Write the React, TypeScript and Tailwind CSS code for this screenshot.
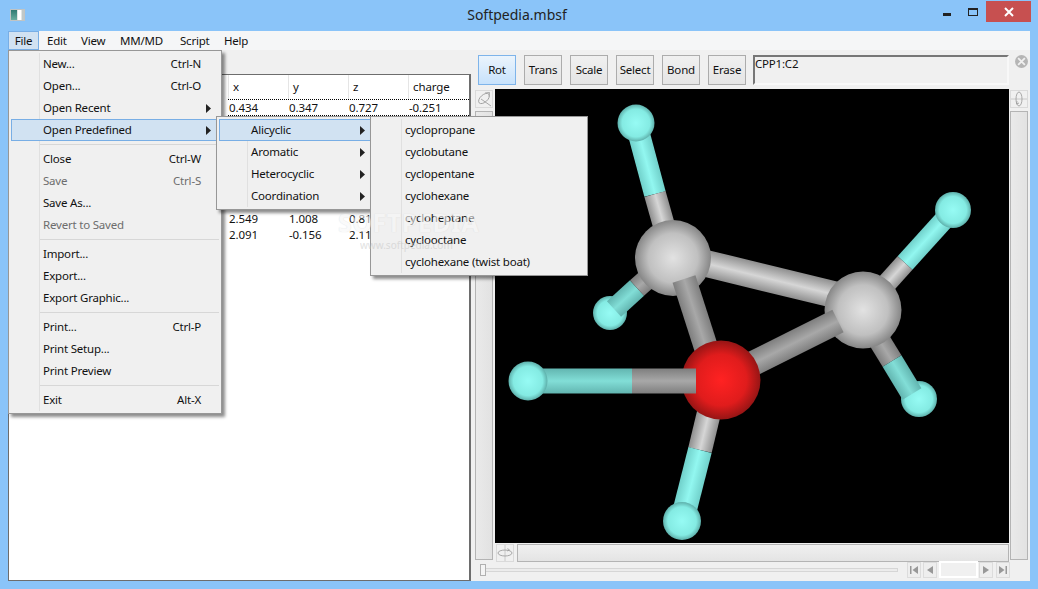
import React from "react";

const font = { fontFamily: '"Noto Sans", "Open Sans", sans-serif' };

type Item = { label?: string; key?: string; arrow?: boolean; off?: boolean; on?: boolean; sep?: boolean };

const fileItems: Item[] = [
  { label: "New...", key: "Ctrl-N" },
  { label: "Open...", key: "Ctrl-O" },
  { label: "Open Recent", arrow: true },
  { label: "Open Predefined", arrow: true, on: true },
  { sep: true },
  { label: "Close", key: "Ctrl-W" },
  { label: "Save", key: "Ctrl-S", off: true },
  { label: "Save As..." },
  { label: "Revert to Saved", off: true },
  { sep: true },
  { label: "Import..." },
  { label: "Export..." },
  { label: "Export Graphic..." },
  { sep: true },
  { label: "Print...", key: "Ctrl-P" },
  { label: "Print Setup..." },
  { label: "Print Preview" },
  { sep: true },
  { label: "Exit", key: "Alt-X" },
];

const predefined: Item[] = [
  { label: "Alicyclic", arrow: true, on: true },
  { label: "Aromatic", arrow: true },
  { label: "Heterocyclic", arrow: true },
  { label: "Coordination", arrow: true },
];

const cyclic: Item[] = ["cyclopropane", "cyclobutane", "cyclopentane", "cyclohexane", "cycloheptane", "cyclooctane", "cyclohexane (twist boat)"].map((label) => ({ label }));

function Menu({ items, className }: { items: Item[]; className: string }) {
  return (
    <div className={`absolute bg-[#f0f0f0] border border-[#979797] p-[2px] shadow-[3px_3px_3px_rgba(0,0,0,0.45)] ${className}`}>
      <div className="absolute left-[30px] top-[2px] bottom-[2px] w-px bg-[#e0e0e0]" />
      {items.map((it, i) =>
        it.sep ? (
          <div key={i} className="h-[7px] flex items-center pl-[29px]">
            <div className="h-px w-full bg-[#d7d7d7]" />
          </div>
        ) : (
          <div
            key={i}
            className={`relative h-[22px] flex items-center pl-[31px] pr-[17px] text-[11.5px] tracking-[-0.2px] leading-none border ${it.on ? "bg-[#d1e2f2] border-[#78aee5]" : "border-transparent"} ${it.off ? "text-[#6d6d6d]" : "text-[#111]"}`}
          >
            <span className="flex-1 whitespace-nowrap">{it.label}</span>
            {it.key && <span className="whitespace-nowrap">{it.key}</span>}
            {it.arrow && (
              <svg className="absolute right-[7px] top-[6px]" width="5" height="9" viewBox="0 0 5 9">
                <path d="M0 0 L5 4.5 L0 9 Z" fill="#222" />
              </svg>
            )}
          </div>
        ),
      )}
    </div>
  );
}

function Bond({ id, a, b, w, stops }: { id: string; a: number[]; b: number[]; w: number; stops: string[] }) {
  const dx = b[0] - a[0];
  const dy = b[1] - a[1];
  const len = Math.hypot(dx, dy);
  const nx = (-dy / len) * (w / 2);
  const ny = (dx / len) * (w / 2);
  const mx = (a[0] + b[0]) / 2;
  const my = (a[1] + b[1]) / 2;
  return (
    <>
      <linearGradient id={id} gradientUnits="userSpaceOnUse" x1={mx - nx} y1={my - ny} x2={mx + nx} y2={my + ny}>
        <stop offset="0" stopColor={stops[0]} />
        <stop offset="0.5" stopColor={stops[1]} />
        <stop offset="1" stopColor={stops[0]} />
      </linearGradient>
      <line x1={a[0]} y1={a[1]} x2={b[0]} y2={b[1]} stroke={`url(#${id})`} strokeWidth={w} />
    </>
  );
}

const cyan = ["#70d0ca", "#92f7f0"];
const cyanDim = ["#62b5b0", "#82ded7"];
const gray = ["#8e8e8e", "#d6d6d6"];
const grayDim = ["#7e7e7e", "#a8a8a8"];

function Molecule() {
  return (
    <svg className="block w-full h-full" viewBox="495 89 514 454">
      <defs>
        <radialGradient id="hAtom" cx="0.5" cy="0.5" r="0.5">
          <stop offset="0" stopColor="#96fbf4" />
          <stop offset="0.75" stopColor="#84ebe3" />
          <stop offset="1" stopColor="#5eb0ab" />
        </radialGradient>
        <radialGradient id="cAtom" cx="0.5" cy="0.5" r="0.5">
          <stop offset="0" stopColor="#e2e2e2" />
          <stop offset="0.65" stopColor="#c0c0c0" />
          <stop offset="1" stopColor="#868686" />
        </radialGradient>
        <radialGradient id="oAtom" cx="0.5" cy="0.5" r="0.5">
          <stop offset="0" stopColor="#ff2222" />
          <stop offset="0.65" stopColor="#e01c1c" />
          <stop offset="1" stopColor="#961515" />
        </radialGradient>
      </defs>

      {/* upper left hydrogen */}
      <Bond id="b1" a={[636, 123]} b={[655, 194]} w={22} stops={cyan} />
      <Bond id="b2" a={[655, 194]} b={[668, 240]} w={22} stops={gray} />
      <circle cx="636" cy="123" r="18.5" fill="url(#hAtom)" />
      {/* lower left hydrogen, behind C1 */}
      <circle cx="610" cy="313" r="17" fill="url(#hAtom)" />
      <Bond id="b3" a={[614, 309]} b={[637, 288]} w={21} stops={cyanDim} />
      <Bond id="b4" a={[637, 288]} b={[655, 272]} w={21} stops={grayDim} />
      {/* C1 - C2 */}
      <Bond id="b5" a={[700, 262]} b={[840, 296]} w={27} stops={gray} />
      <circle cx="673" cy="258" r="38" fill="url(#cAtom)" />
      <Bond id="b6" a={[684, 279]} b={[710, 360]} w={24} stops={grayDim} />
      {/* C2 hydrogens */}
      <Bond id="b7" a={[953, 210]} b={[905, 263]} w={20} stops={cyan} />
      <Bond id="b8" a={[905, 263]} b={[878, 293]} w={20} stops={gray} />
      <circle cx="953" cy="210" r="18" fill="url(#hAtom)" />
      <circle cx="919" cy="399" r="18" fill="url(#hAtom)" />
      <Bond id="b10" a={[873, 330]} b={[892, 361]} w={22} stops={grayDim} />
      <Bond id="b11" a={[892, 361]} b={[912, 394]} w={22} stops={cyanDim} />
      <circle cx="863" cy="310" r="38.5" fill="url(#cAtom)" />
      <Bond id="b12" a={[838, 321]} b={[740, 370]} w={25} stops={grayDim} />
      {/* oxygen */}
      <Bond id="b13" a={[712, 400]} b={[700, 450]} w={24} stops={gray} />
      <Bond id="b14" a={[700, 450]} b={[682, 521]} w={24} stops={cyan} />
      <circle cx="682" cy="521" r="19" fill="url(#hAtom)" />
      <circle cx="721" cy="380" r="39.5" fill="url(#oAtom)" />
      <Bond id="b15" a={[528, 381]} b={[632, 381]} w={25} stops={cyanDim} />
      <Bond id="b16" a={[632, 381]} b={[696, 381]} w={25} stops={grayDim} />
      <circle cx="528" cy="381" r="19.5" fill="url(#hAtom)" />
    </svg>
  );
}

function ToolButton({ label, on }: { label: string; on?: boolean }) {
  return (
    <div
      className={`w-[38px] h-[30px] flex items-center justify-center text-[11.5px] tracking-[-0.2px] text-[#111] border ${on ? "border-[#7eb4ea] bg-gradient-to-b from-[#ebf4fc] to-[#c7e2fc]" : "border-[#acacac] bg-gradient-to-b from-[#f0f0f0] to-[#e5e5e5]"}`}
    >
      {label}
    </div>
  );
}

function RotIcon({ kind }: { kind: "x" | "y" | "z" }) {
  return (
    <div className="w-[18px] h-[18px] border border-[#dadada] flex items-center justify-center shrink-0">
      <svg width="16" height="16" viewBox="0 0 16 16" fill="none" stroke="#a0a0a0" strokeWidth="0.9">
        {kind === "z" && (
          <>
            <ellipse cx="8" cy="7.5" rx="6.5" ry="3.6" transform="rotate(-42 8 7.5)" />
            <path d="M9 2 L13.5 1.5 L13 5.5" />
            <path d="M5 8 L15 15" />
          </>
        )}
        {kind === "y" && (
          <>
            <path d="M0 8 L16 8" stroke="#c4c4c4" />
            <ellipse cx="8" cy="8" rx="3" ry="7" />
            <path d="M6 10 L5.5 13 L8 12" />
          </>
        )}
        {kind === "x" && (
          <>
            <path d="M8 0 L8 16" stroke="#c4c4c4" />
            <ellipse cx="8" cy="8" rx="7" ry="3" />
            <path d="M10 6 L12.5 5 L10.5 3.5" />
          </>
        )}
      </svg>
    </div>
  );
}

function NavButton({ d }: { d: string }) {
  return (
    <div className="w-[14px] h-[16px] border border-[#dcdcdc] bg-[#eeeeee] flex items-center justify-center">
      <svg width="10" height="10" viewBox="0 0 10 10">
        <path d={d} fill="#989898" />
      </svg>
    </div>
  );
}

export default function App() {
  return (
    <div className="relative w-[1038px] h-[589px] overflow-hidden bg-[#8ac4f9] flex flex-col" style={font}>
      {/* title bar */}
      <div className="h-[31px] flex items-start shrink-0">
        <div className="ml-[10px] mt-[9px] w-[15px] h-[12px] bg-[#e0e4e4] border border-[#c0c4c4] flex">
          <div className="w-[6px] bg-gradient-to-b from-[#2f7a72] to-[#6aaea0]" />
          <div className="w-[3px] ml-[1px] bg-white" />
          <div className="w-[2px] ml-[1px] bg-[#c0c8c8]" />
        </div>
        <div className="flex-1 text-center text-[14px] leading-[30px] text-[#222] pl-[66px]">Softpedia.mbsf</div>
        <div className="w-[8px] h-[3px] bg-[#222] mt-[13px]" />
        <div className="w-[10px] h-[8px] border border-t-2 border-[#222] mt-[8px] ml-[17px]" />
        <div className="w-[45px] h-[21px] ml-[8px] mr-[7px] mt-px bg-[#c75050] flex items-center justify-center">
          <svg width="10" height="10" viewBox="0 0 10 10">
            <path d="M1 1 L9 9 M9 1 L1 9" stroke="#fff" strokeWidth="2" />
          </svg>
        </div>
      </div>

      {/* client */}
      <div className="flex-1 mx-[8px] mb-[8px] bg-[#f0f0f0] flex flex-col min-h-0">
        <div className="h-[19px] bg-[#f5f6f7] flex items-center text-[11.5px] tracking-[-0.2px] text-[#111] shrink-0">
          <div className="w-[31px] h-full flex items-center justify-center bg-[#d1e2f2] border border-[#78aee5]">File</div>
          <div className="pl-[8px] w-[34px]">Edit</div>
          <div className="pl-[8px] w-[39px]">View</div>
          <div className="pl-[8px] w-[60px]">MM/MD</div>
          <div className="pl-[8px] w-[44px]">Script</div>
          <div className="pl-[8px]">Help</div>
        </div>

        <div className="flex-1 flex min-h-0">
          {/* atom table */}
          <div className="w-[463px] pt-[24px] flex flex-col shrink-0">
            <div className="flex-1 bg-white border-l border-t border-r-2 border-b border-[#6d6d6d] text-[11.5px] tracking-[-0.1px] text-[#111] pl-[219px]">
              <div className="h-[24px] flex items-center">
                {["x", "y", "z", "charge"].map((h) => (
                  <div key={h} className="w-[60px] h-full flex items-center pl-[4px] border-l border-[#e5e5e5]">{h}</div>
                ))}
              </div>
              <div className="h-[17px] flex items-center border-y border-dotted border-black">
                {["0.434", "0.347", "0.727", "-0.251"].map((v) => (
                  <div key={v} className="w-[60px] pl-[1px]">{v}</div>
                ))}
              </div>
              <div className="h-[95px]" />
              {[["2.549", "1.008", "0.81"], ["2.091", "-0.156", "2.11"]].map((row) => (
                <div key={row[0]} className="h-[16px] flex items-center">
                  {row.map((v) => (
                    <div key={v} className="w-[60px] pl-[1px]">{v}</div>
                  ))}
                </div>
              ))}
            </div>
          </div>

          {/* viewer */}
          <div className="flex-1 flex flex-col min-w-0">
            <div className="flex items-start pt-[5px] pl-[7px] shrink-0">
              <div className="flex gap-[8px]">
                <ToolButton label="Rot" on />
                <ToolButton label="Trans" />
                <ToolButton label="Scale" />
                <ToolButton label="Select" />
                <ToolButton label="Bond" />
                <ToolButton label="Erase" />
              </div>
              <div className="ml-[7px] w-[256px] h-[30px] bg-[#f0f0f0] border-2 border-r-[#f8f8f8] border-b-[#f8f8f8] border-t-[#777] border-l-[#777] text-[11.5px] tracking-[-0.2px] leading-[14px] text-[#111]">CPP1:C2</div>
              <div className="ml-[6px] w-[13px] h-[13px] rounded-full bg-[#b5b5b5] flex items-center justify-center">
                <svg width="9" height="9" viewBox="0 0 8 8">
                  <path d="M1 1 L7 7 M7 1 L1 7" stroke="#f0f0f0" strokeWidth="1.6" />
                </svg>
              </div>
            </div>

            <div className="flex pl-[4px] pt-[4px] h-[475px] shrink-0">
              <div className="w-[18px] flex flex-col gap-[3px] pt-px">
                <RotIcon kind="z" />
                <div className="flex-1 border border-[#b4b4b4] bg-gradient-to-r from-[#eaeaea] to-[#e2e2e2]" />
              </div>
              <div className="w-[514px] ml-[2px] flex flex-col">
                <div className="h-[454px] bg-black shrink-0">
                  <Molecule />
                </div>
                <div className="flex pt-px pl-px gap-[3px] flex-1">
                  <RotIcon kind="x" />
                  <div className="flex-1 border border-[#b4b4b4] bg-gradient-to-b from-[#f0f0f0] to-[#e4e4e4]" />
                </div>
              </div>
              <div className="w-[18px] ml-[1px] flex flex-col gap-[3px] pt-px">
                <RotIcon kind="y" />
                <div className="flex-1 border border-[#b4b4b4] bg-gradient-to-r from-[#eaeaea] to-[#e2e2e2]" />
              </div>
            </div>

            <div className="flex items-center pl-[9px] h-[17px] mt-px">
              <div className="relative w-[418px] h-[4px] border border-[#d6d6d6] bg-[#ececec]">
                <div className="absolute -left-px -top-[5px] w-[6px] h-[12px] bg-[#f4f4f4] border border-[#b0b0b0]" />
              </div>
              <div className="ml-[9px] flex items-center">
                <NavButton d="M1 1 H2.5 V9 H1 Z M9 1 V9 L3.5 5 Z" />
                <div className="w-[2px]" />
                <NavButton d="M8 1 V9 L2 5 Z" />
                <div className="w-[39px] h-[17px] ml-[2px] mr-px bg-[#f0f0f0] border-2 border-white" />
                <NavButton d="M2 1 V9 L8 5 Z" />
                <div className="w-[3px]" />
                <NavButton d="M1 1 L6.5 5 L1 9 Z M7.5 1 H9 V9 H7.5 Z" />
              </div>
            </div>
          </div>
        </div>
      </div>

      {/* open menus */}
      <Menu items={fileItems} className="left-[8px] top-[50px] w-[214px]" />
      <Menu items={predefined} className="left-[216px] top-[116px] w-[160px]" />
      <Menu items={cyclic} className="left-[370px] top-[116px] w-[218px]" />

      {/* watermark */}
      <div className="absolute left-[338px] top-[204px] text-[25px] font-bold tracking-[0.5px] text-[#f7f7f7] [text-shadow:0_0_1px_#c8c8c8] opacity-60 pointer-events-none">SOFTPEDIA</div>
      <div className="absolute left-[360px] top-[238px] text-[10px] text-[#c4c4c4] opacity-50 pointer-events-none">www.softpedia.com</div>
    </div>
  );
}
